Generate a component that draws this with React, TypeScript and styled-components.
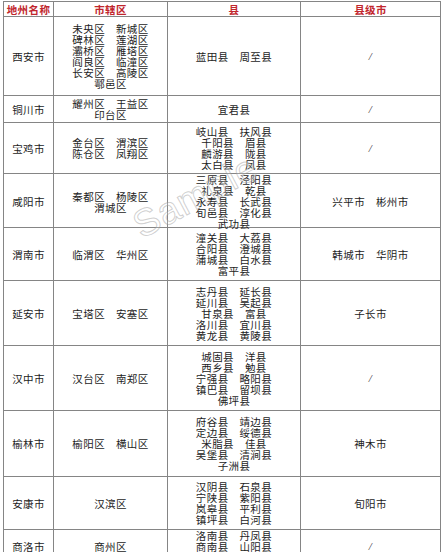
import { FunctionComponent } from "react";
import styled, { createGlobalStyle } from "styled-components";

const GlobalStyle = createGlobalStyle`
  html, body {
    margin: 0;
    padding: 0;
    background: #fff;
  }
  body {
    font-family: "Noto Sans CJK SC", "Liberation Serif", serif;
  }
`;

interface Region {
    city: string;
    districts: string[];
    counties: string[];
    cityLevel: string[];
    height: number;
}

const S = "\u3000";

const regions: Region[] = [
    {
        city: "西安市",
        districts: [`未央区${S}新城区`, `碑林区${S}莲湖区`, `灞桥区${S}雁塔区`, `阎良区${S}临潼区`, `长安区${S}高陵区`, "鄠邑区"],
        counties: [`蓝田县${S}周至县`],
        cityLevel: ["/"],
        height: 79,
    },
    {
        city: "铜川市",
        districts: [`耀州区${S}王益区`, "印台区"],
        counties: ["宜君县"],
        cityLevel: ["/"],
        height: 27,
    },
    {
        city: "宝鸡市",
        districts: [`金台区${S}渭滨区`, `陈仓区${S}凤翔区`],
        counties: [`岐山县${S}扶风县`, `千阳县${S}眉县`, `麟游县${S}陇县`, `太白县${S}凤县`],
        cityLevel: ["/"],
        height: 51,
    },
    {
        city: "咸阳市",
        districts: [`秦都区${S}杨陵区`, "渭城区"],
        counties: [`三原县${S}泾阳县`, `礼泉县${S}乾县`, `永寿县${S}长武县`, `旬邑县${S}淳化县`, "武功县"],
        cityLevel: [`兴平市${S}彬州市`],
        height: 54,
    },
    {
        city: "渭南市",
        districts: [`临渭区${S}华州区`],
        counties: [`潼关县${S}大荔县`, `合阳县${S}澄城县`, `蒲城县${S}白水县`, "富平县"],
        cityLevel: [`韩城市${S}华阴市`],
        height: 53,
    },
    {
        city: "延安市",
        districts: [`宝塔区${S}安塞区`],
        counties: [`志丹县${S}延长县`, `延川县${S}吴起县`, `甘泉县${S}富县`, `洛川县${S}宜川县`, `黄龙县${S}黄陵县`],
        cityLevel: ["子长市"],
        height: 65,
    },
    {
        city: "汉中市",
        districts: [`汉台区${S}南郑区`],
        counties: [`城固县${S}洋县`, `西乡县${S}勉县`, `宁强县${S}略阳县`, `镇巴县${S}留坝县`, "佛坪县"],
        cityLevel: ["/"],
        height: 65,
    },
    {
        city: "榆林市",
        districts: [`榆阳区${S}横山区`],
        counties: [`府谷县${S}靖边县`, `定边县${S}绥德县`, `米脂县${S}佳县`, `吴堡县${S}清涧县`, "子洲县"],
        cityLevel: ["神木市"],
        height: 66,
    },
    {
        city: "安康市",
        districts: ["汉滨区"],
        counties: [`汉阴县${S}石泉县`, `宁陕县${S}紫阳县`, `岚皋县${S}平利县`, `镇坪县${S}白河县`],
        cityLevel: ["旬阳市"],
        height: 53,
    },
    {
        city: "商洛市",
        districts: ["商州区"],
        counties: [`洛南县${S}丹凤县`, `商南县${S}山阳县`, `镇安县${S}柞水县`],
        cityLevel: ["/"],
        height: 33,
    },
];

const Page = styled.div`
    position: relative;
    width: 444px;
    height: 552px;
    overflow: hidden;
    padding: 1px 0 0 3px;
    box-sizing: border-box;
`;

const Table = styled.div`
    width: 438px;
    border-top: 1px solid #858585;
    border-left: 1px solid #858585;
    box-sizing: border-box;
`;

const Row = styled.div<{ $h: number }>`
    display: grid;
    grid-template-columns: 50px 114px 133px 140px;
    height: ${(p) => p.$h}px;
    border-bottom: 1px solid #858585;
    box-sizing: border-box;
`;

const Cell = styled.div`
    display: flex;
    flex-direction: column;
    align-items: center;
    justify-content: center;
    border-right: 1px solid #858585;
    font-size: 10.5px;
    letter-spacing: 0.4px;
    line-height: 11px;
    color: #1c1c1c;
`;

const HeadCell = styled(Cell)`
    color: #c1262d;
    font-weight: bold;
`;

const Line = styled.span`
    white-space: pre;
`;

const Slash = styled.span`
    font-family: "Liberation Serif", serif;
    font-style: italic;
    font-size: 11px;
    color: #333;
`;

const Watermark = styled.div`
    position: absolute;
    left: 146px;
    top: 204px;
    font-family: "Liberation Sans", sans-serif;
    font-size: 38px;
    letter-spacing: 1px;
    color: rgba(255, 255, 255, 0.2);
    -webkit-text-stroke: 1px rgba(150, 150, 150, 0.45);
    transform: rotate(-28deg);
    transform-origin: left bottom;
    pointer-events: none;
`;

const Lines: FunctionComponent<{ items: string[] }> = ({ items }) => (
    <>
        {items.map((t, i) =>
            t === "/" ? <Slash key={i}>/</Slash> : <Line key={i}>{t}</Line>
        )}
    </>
);

const App: FunctionComponent = () => {
    return (
        <Page>
            <GlobalStyle />
            <Table>
                <Row $h={15}>
                    <HeadCell>地州名称</HeadCell>
                    <HeadCell>市辖区</HeadCell>
                    <HeadCell>县</HeadCell>
                    <HeadCell>县级市</HeadCell>
                </Row>
                {regions.map((r) => (
                    <Row key={r.city} $h={r.height}>
                        <Cell><Line>{r.city}</Line></Cell>
                        <Cell><Lines items={r.districts} /></Cell>
                        <Cell><Lines items={r.counties} /></Cell>
                        <Cell><Lines items={r.cityLevel} /></Cell>
                    </Row>
                ))}
            </Table>
            <Watermark>Sample</Watermark>
        </Page>
    );
};

export default App;
